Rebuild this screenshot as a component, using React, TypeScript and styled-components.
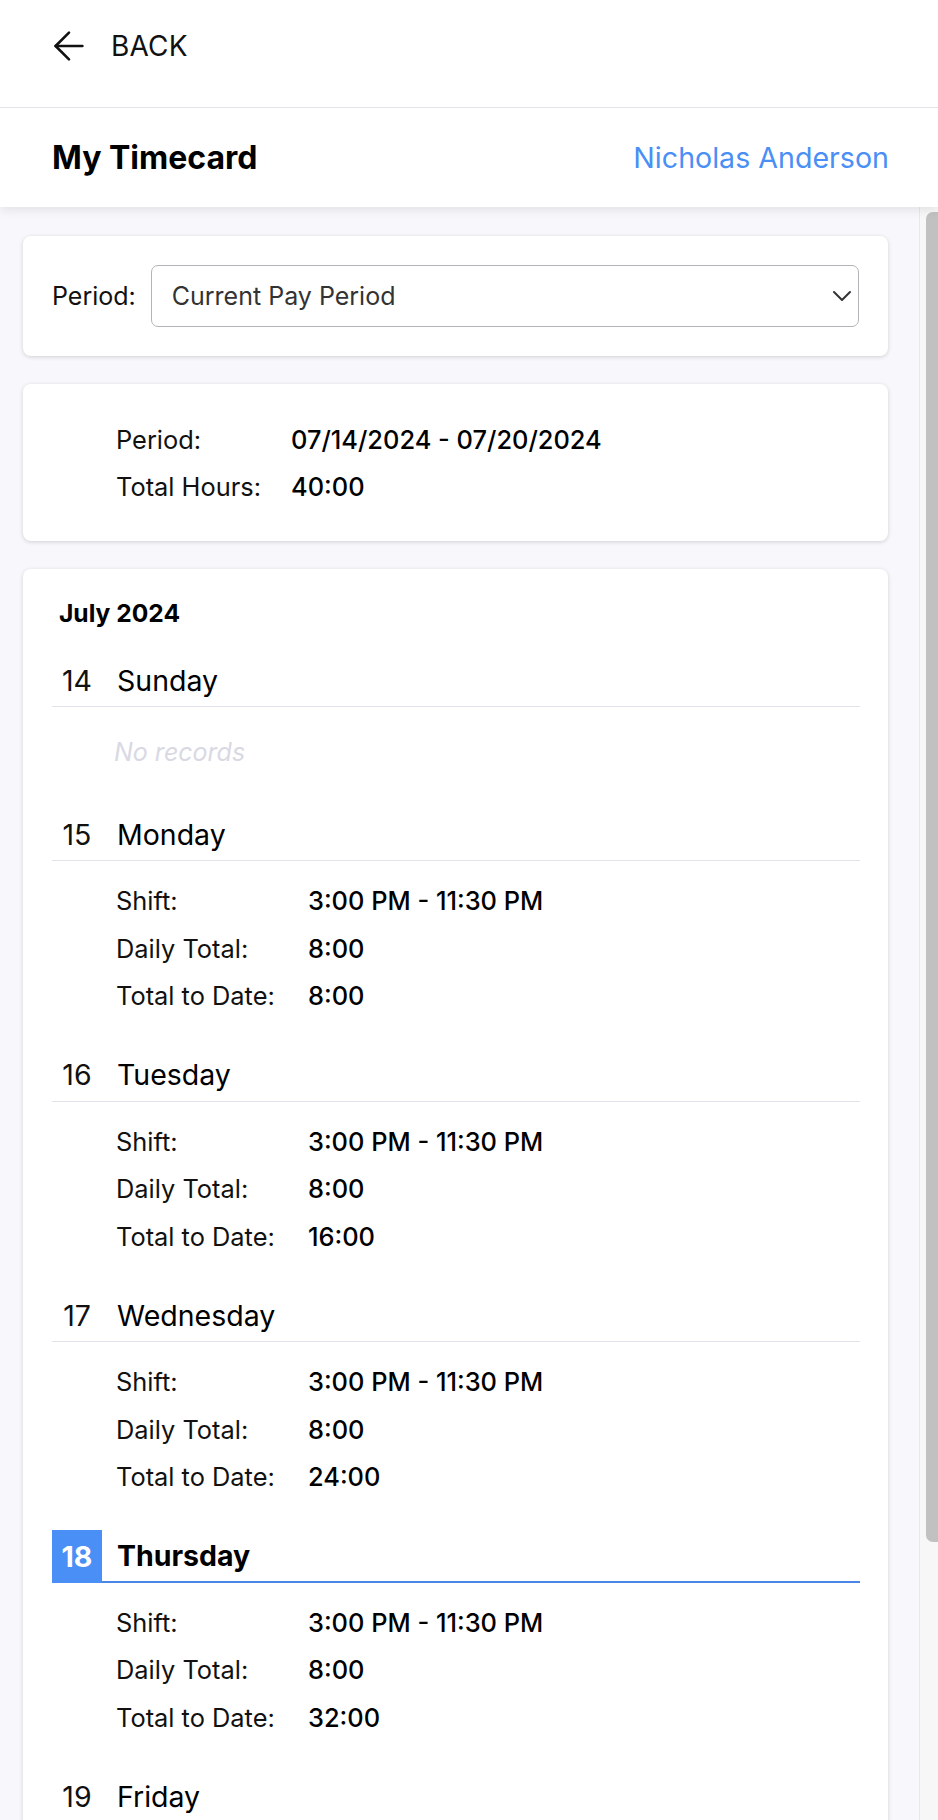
import { ArrowLeft, ChevronDown } from "lucide-react";
import styled, { createGlobalStyle } from "styled-components";

const GlobalStyle = createGlobalStyle`
  * {
    box-sizing: border-box;
  }
  html, body, #root {
    margin: 0;
    height: 100%;
  }
  body {
    font-family: Inter, "Noto Sans", "Liberation Sans", sans-serif;
    color: #111;
    background: #fff;
    overflow: hidden;
  }
`;

const Page = styled.div`
  height: 100vh;
  display: flex;
  flex-direction: column;
`;

const Header = styled.header`
  flex-shrink: 0;
  background: #fff;
  box-shadow: 0 3px 10px rgba(0, 0, 0, 0.09);
  position: relative;
  z-index: 2;
`;

const BackBar = styled.div`
  height: 108px;
  display: flex;
  align-items: center;
  padding: 0 0 16px 46px;
  border-bottom: 1px solid #e4e4e8;
`;

const BackButton = styled.button`
  display: flex;
  align-items: center;
  gap: 19px;
  background: none;
  border: 0;
  padding: 0;
  font-family: inherit;
  font-size: 28px;
  color: #111;
  letter-spacing: 0.2px;
  cursor: pointer;
`;

const TitleBar = styled.div`
  height: 99px;
  display: flex;
  align-items: center;
  justify-content: space-between;
  padding: 0 49px 0 52px;
`;

const Title = styled.h1`
  margin: 0;
  font-size: 32px;
  font-weight: 700;
  color: #000;
`;

const UserName = styled.a`
  font-size: 28.6px;
  color: #4a8ff5;
  text-decoration: none;
`;

const Main = styled.main`
  flex: 1;
  min-height: 0;
  display: flex;
  background: #f8f8fc;
`;

const Content = styled.div`
  flex: 1;
  min-width: 0;
  overflow: hidden;
  padding: 29px 31px 29px 23px;
  display: flex;
  flex-direction: column;
  gap: 28px;
`;

const ScrollRail = styled.div`
  width: 19px;
  flex-shrink: 0;
  background: #f7f7f7;
  border-left: 1px solid #e8e8e8;
  padding: 5px 0 0 6px;
`;

const ScrollThumb = styled.div`
  height: 1330px;
  background: #c1c1c1;
  border-radius: 7px 0 0 7px;
`;

const Card = styled.section<{ $pad: string }>`
  flex-shrink: 0;
  background: #fff;
  border-radius: 8px;
  box-shadow: 0 1px 4px rgba(0, 0, 0, 0.16);
  padding: ${(p) => p.$pad};
`;

const FilterRow = styled.label`
  display: flex;
  align-items: center;
  gap: 15px;
  font-size: 25px;
`;

const SelectBox = styled.div`
  flex: 1;
  height: 62px;
  border: 1px solid #b4b4b8;
  border-radius: 7px;
  display: flex;
  align-items: center;
  justify-content: space-between;
  padding: 0 0 0 20px;
  color: #333;
  font-size: 25px;
`;

const InfoRow = styled.div<{ $labelWidth: number; $height: number }>`
  display: grid;
  grid-template-columns: ${(p) => p.$labelWidth}px 1fr;
  align-items: center;
  height: ${(p) => p.$height}px;
  font-size: 25.4px;
`;

const InfoLabel = styled.span`
  color: #111;
`;

const InfoValue = styled.span`
  font-weight: 500;
  color: #000;
`;

const Month = styled.h2`
  margin: 0 0 26px 7px;
  height: 30px;
  line-height: 30px;
  font-size: 24.6px;
  font-weight: 700;
  color: #000;
`;

const DayHeader = styled.div<{ $active?: boolean }>`
  height: 53px;
  display: flex;
  align-items: center;
  border-bottom: ${(p) => (p.$active ? "2px solid #4a86e6" : "1px solid #e2e2ea")};
`;

const DayNum = styled.span<{ $active?: boolean }>`
  width: 50px;
  align-self: stretch;
  margin-bottom: ${(p) => (p.$active ? "-2px" : "0")};
  display: flex;
  align-items: center;
  justify-content: center;
  font-size: 28.5px;
  font-weight: ${(p) => (p.$active ? 700 : 400)};
  color: ${(p) => (p.$active ? "#fff" : "#111")};
  background: ${(p) => (p.$active ? "#4a8ff5" : "transparent")};
`;

const DayName = styled.span<{ $active?: boolean }>`
  margin-left: 15px;
  font-size: 28.5px;
  font-weight: ${(p) => (p.$active ? 700 : 400)};
  color: #000;
`;

const DayBody = styled.div`
  padding: 16px 0 29px 64px;
`;

const EmptyNote = styled.div`
  padding: 21px 0 33px 62px;
  height: 101px;
  font-size: 25px;
  font-style: italic;
  color: #d9d9e4;
  line-height: 48px;
`;

interface Shift {
  shift: string;
  daily: string;
  toDate: string;
}

interface Day {
  num: number;
  name: string;
  active?: boolean;
  shift?: Shift;
}

const days: Day[] = [
  { num: 14, name: "Sunday" },
  { num: 15, name: "Monday", shift: { shift: "3:00 PM - 11:30 PM", daily: "8:00", toDate: "8:00" } },
  { num: 16, name: "Tuesday", shift: { shift: "3:00 PM - 11:30 PM", daily: "8:00", toDate: "16:00" } },
  { num: 17, name: "Wednesday", shift: { shift: "3:00 PM - 11:30 PM", daily: "8:00", toDate: "24:00" } },
  { num: 18, name: "Thursday", active: true, shift: { shift: "3:00 PM - 11:30 PM", daily: "8:00", toDate: "32:00" } },
  { num: 19, name: "Friday", shift: { shift: "3:00 PM - 11:30 PM", daily: "8:00", toDate: "40:00" } },
  { num: 20, name: "Saturday" },
];

function DayBlock({ day }: { day: Day }) {
  return (
    <div>
      <DayHeader $active={day.active}>
        <DayNum $active={day.active}>{day.num}</DayNum>
        <DayName $active={day.active}>{day.name}</DayName>
      </DayHeader>
      {day.shift ? (
        <DayBody>
          <InfoRow $labelWidth={192} $height={47.5}>
            <InfoLabel>Shift:</InfoLabel>
            <InfoValue>{day.shift.shift}</InfoValue>
          </InfoRow>
          <InfoRow $labelWidth={192} $height={47.5}>
            <InfoLabel>Daily Total:</InfoLabel>
            <InfoValue>{day.shift.daily}</InfoValue>
          </InfoRow>
          <InfoRow $labelWidth={192} $height={47.5}>
            <InfoLabel>Total to Date:</InfoLabel>
            <InfoValue>{day.shift.toDate}</InfoValue>
          </InfoRow>
        </DayBody>
      ) : (
        <EmptyNote>No records</EmptyNote>
      )}
    </div>
  );
}

export default function App() {
  return (
    <Page>
      <GlobalStyle />
      <Header>
        <BackBar>
          <BackButton>
            <ArrowLeft size={46} strokeWidth={1.35} />
            BACK
          </BackButton>
        </BackBar>
        <TitleBar>
          <Title>My Timecard</Title>
          <UserName>Nicholas Anderson</UserName>
        </TitleBar>
      </Header>
      <Main>
        <Content>
          <Card $pad="29px">
            <FilterRow>
              Period:
              <SelectBox>
                Current Pay Period
                <ChevronDown size={32} strokeWidth={1.5} color="#333" />
              </SelectBox>
            </FilterRow>
          </Card>
          <Card $pad="32px 29px 31px 93px">
            <InfoRow $labelWidth={175} $height={47}>
              <InfoLabel>Period:</InfoLabel>
              <InfoValue>07/14/2024 - 07/20/2024</InfoValue>
            </InfoRow>
            <InfoRow $labelWidth={175} $height={47}>
              <InfoLabel>Total Hours:</InfoLabel>
              <InfoValue>40:00</InfoValue>
            </InfoRow>
          </Card>
          <Card $pad="29px 28px 30px 29px">
            <Month>July 2024</Month>
            {days.map((d) => (
              <DayBlock key={d.num} day={d} />
            ))}
          </Card>
        </Content>
        <ScrollRail>
          <ScrollThumb />
        </ScrollRail>
      </Main>
    </Page>
  );
}
